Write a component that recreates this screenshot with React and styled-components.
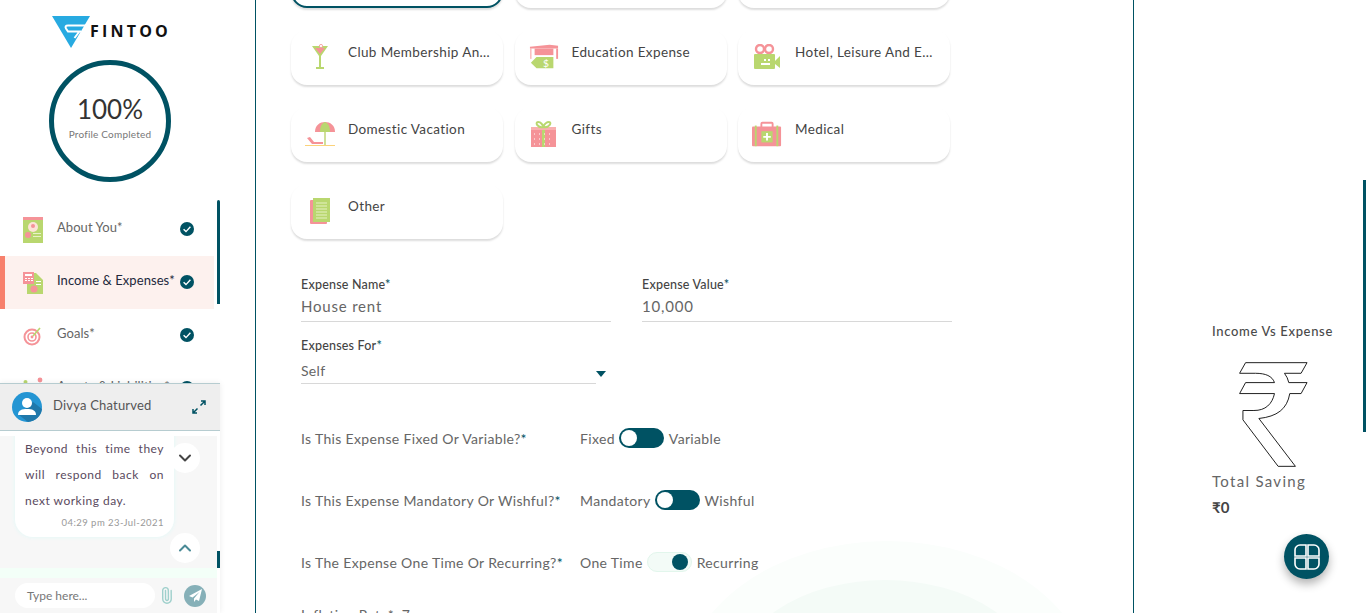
import React from 'react';
import styled, { createGlobalStyle } from 'styled-components';
import { ChevronDown, ChevronUp, Paperclip } from 'lucide-react';

const TEAL = '#005263';
const PINK = '#f59398';
const GREEN = '#b9d76f';

const GlobalStyle = createGlobalStyle`
  html, body {
    margin: 0;
    padding: 0;
    height: 613px;
    overflow: hidden;
    background: #fff;
    font-family: "Lato", "Open Sans", sans-serif;
    color: #444;
  }
  * { box-sizing: border-box; }
`;

const Page = styled.div`
  display: grid;
  grid-template-columns: 256px 878px 232px;
  height: 613px;
  overflow: hidden;
`;

/* sidebar */
const Sidebar = styled.aside`
  position: relative;
  height: 613px;
  padding-top: 16px;
  border-right: 1px solid ${TEAL};
  overflow: hidden;
`;

const Logo = styled.div`
  display: flex;
  align-items: center;
  height: 32px;
  margin-left: 52px;
`;

const LogoText = styled.span`
  font-family: "Open Sans", sans-serif;
  font-weight: 700;
  font-size: 16px;
  letter-spacing: 3.2px;
  color: #111;
  margin-left: -1px;
  margin-top: -2px;
`;

const ProgressRing = styled.div`
  display: flex;
  flex-direction: column;
  align-items: center;
  justify-content: center;
  width: 122px;
  height: 122px;
  margin: 12px 0 0 49px;
  border: 5px solid ${TEAL};
  border-radius: 50%;
`;

const Percent = styled.div`
  font-size: 26px;
  line-height: 30px;
  color: #333;
  margin-top: -7px;
`;

const RingLabel = styled.div`
  font-size: 10px;
  line-height: 14px;
  letter-spacing: 0.2px;
  margin-top: 3px;
  color: #777;
`;

const Nav = styled.nav`
  margin-top: 21px;
  width: 214px;
`;

const NavItem = styled.div`
  display: flex;
  align-items: center;
  height: 53px;
  padding-right: 20px;
  padding-left: ${(p) => (p.$active ? '18px' : '23px')};
  border-left: ${(p) => (p.$active ? '5px solid #f7806c' : 'none')};
  background: ${(p) => (p.$active ? '#fdf1ee' : 'transparent')};
  font-size: 13px;
  letter-spacing: 0.06px;
  color: ${(p) => (p.$active ? '#22283c' : '#666')};
`;

const NavIcon = styled.span`
  display: flex;
  width: 34px;
  flex: none;
`;

const NavLabel = styled.span`
  flex: 1;
  white-space: nowrap;
  margin-top: -6px;
`;

const NavScroll = styled.div`
  position: absolute;
  left: 217px;
  top: 200px;
  width: 3px;
  height: 104px;
  background: ${TEAL};
  border-radius: 2px 2px 0 0;
`;

/* chat */
const Chat = styled.div`
  position: absolute;
  left: 0;
  top: 383px;
  width: 220px;
  height: 230px;
  display: flex;
  flex-direction: column;
  background: #fff;
  box-shadow: 0 0 6px rgba(0, 0, 0, 0.08);
`;

const ChatHeader = styled.div`
  display: flex;
  align-items: center;
  flex: none;
  height: 48px;
  padding: 0 14px 0 12px;
  background: #eeeeee;
  border-top: 1px solid #b6ccd0;
  border-bottom: 1px solid #b6ccd0;
`;

const ChatName = styled.div`
  flex: 1;
  margin-left: 11px;
  margin-top: -4px;
  font-size: 13px;
  letter-spacing: 0.2px;
  color: #555;
`;

const ChatBody = styled.div`
  position: relative;
  height: 132px;
  margin-top: 5px;
  width: 217px;
  padding-left: 15px;
  background: #f7f7f7;
  overflow: hidden;
`;

const Bubble = styled.div`
  width: 159px;
  margin-top: -20px;
  padding: 20px 10px 8px;
  background: #fff;
  border-radius: 0 0 18px 18px;
  box-shadow: 0 0 4px #dff9f8;
`;

const BubbleText = styled.div`
  font-size: 12px;
  line-height: 26px;
  letter-spacing: 0.5px;
  text-align: justify;
  color: #5a4a5e;
`;

const BubbleTime = styled.div`
  font-size: 9.5px;
  line-height: 12px;
  letter-spacing: 0.45px;
  text-align: right;
  color: #999;
  margin-top: 3px;
`;

const ScrollButton = styled.div`
  position: absolute;
  left: 170px;
  top: ${(p) => p.$top}px;
  width: 30px;
  height: 30px;
  display: flex;
  align-items: center;
  justify-content: center;
  border-radius: 50%;
  background: #fff;
  color: ${(p) => p.$color};
`;

const GreenStrip = styled.div`
  flex: none;
  height: 10px;
  width: 217px;
  background: #f3fff8;
`;

const ChatScrollPiece = styled.div`
  position: absolute;
  left: 217px;
  top: 168px;
  width: 3px;
  height: 17px;
  background: ${TEAL};
`;

const ChatInputRow = styled.div`
  display: flex;
  align-items: center;
  flex: 1;
  width: 217px;
  padding-left: 15px;
  background: #f7f7f7;
`;

const ChatInput = styled.div`
  width: 140px;
  height: 25px;
  padding-left: 12px;
  border-radius: 13px;
  background: #fff;
  font-size: 12px;
  line-height: 25px;
  color: #777;
`;

const ClipIcon = styled(Paperclip)`
  margin-left: 3px;
  color: #9fd0cc;
  transform: rotate(-45deg);
`;

const SendButton = styled.div`
  display: flex;
  align-items: center;
  justify-content: center;
  width: 22px;
  height: 22px;
  margin-left: 9px;
  border-radius: 50%;
  background: #86b0b8;
`;

/* main */
const Main = styled.main`
  position: relative;
  height: 613px;
  border-right: 1px solid ${TEAL};
  overflow: hidden;
`;

const WaveOuter = styled.div`
  position: absolute;
  left: 426px;
  top: 541px;
  width: 410px;
  height: 300px;
  border-radius: 50%;
  background: #fbfefc;
`;

const WaveInner = styled.div`
  position: absolute;
  left: 478px;
  top: 580px;
  width: 302px;
  height: 200px;
  border-radius: 50%;
  background: #f4fbf7;
`;

const Content = styled.div`
  position: relative;
  margin-top: -47px;
  padding-left: 35px;
`;

const ExpenseGrid = styled.div`
  display: grid;
  grid-template-columns: repeat(3, 212px);
  column-gap: 11.5px;
  row-gap: 22px;
`;

const Card = styled.div`
  display: flex;
  align-items: flex-start;
  height: 55px;
  padding: 14px 8px 0 14px;
  background: #fff;
  border-radius: 16px;
  border: ${(p) => (p.$selected ? `2px solid ${TEAL}` : 'none')};
  box-shadow: 0 2px 2px #ddd;
  font-size: 13.5px;
  letter-spacing: 0.38px;
  color: #444;
`;

const CardIcon = styled.span`
  display: flex;
  justify-content: center;
  flex: none;
  width: 30px;
  margin-right: 13px;
`;

const CardLabel = styled.span`
  white-space: nowrap;
  line-height: 16px;
`;

const Form = styled.div`
  padding-left: 10px;
  margin-top: 37px;
`;

const FieldRow = styled.div`
  display: grid;
  grid-template-columns: 310px 310px;
  column-gap: 31px;
`;

const Field = styled.div`
  padding-top: 1px;
  border-bottom: 1px solid #d8d8d8;
  height: 46px;
`;

const FieldLabel = styled.div`
  font-size: 12.5px;
  line-height: 16px;
  font-weight: 500;
  letter-spacing: 0.2px;
  color: #444;
  span { color: ${TEAL}; }
`;

const FieldValue = styled.div`
  font-size: 15px;
  line-height: 22px;
  margin-top: 2px;
  letter-spacing: 0.8px;
  color: #666;
`;

const SelectWrap = styled.div`
  display: flex;
  align-items: flex-end;
  margin-top: 16px;
`;

const SelectField = styled.div`
  width: 295px;
  height: 46px;
  border-bottom: 1px solid #d8d8d8;
`;

const SelectValue = styled.div`
  margin-top: 8px;
  font-size: 14px;
  line-height: 18px;
  letter-spacing: 0.3px;
  color: #666;
`;

const Caret = styled.div`
  width: 0;
  height: 0;
  margin: 0 0 7px 0;
  border-left: 5.5px solid transparent;
  border-right: 5.5px solid transparent;
  border-top: 6.5px solid ${TEAL};
`;

const ToggleRows = styled.div`
  margin-top: 44px;
  display: flex;
  flex-direction: column;
  gap: 42px;
`;

const ToggleRow = styled.div`
  display: flex;
  align-items: center;
  height: 20px;
  font-size: 14px;
  letter-spacing: 0.34px;
  color: #666;
  span.star { color: ${TEAL}; }
`;

const InflationRow = styled(ToggleRow)`
  margin-top: -10px;
`;

const Question = styled.div`
  width: 279px;
  flex: none;
  white-space: nowrap;
`;

const Switch = styled.div`
  display: flex;
  align-items: center;
  justify-content: ${(p) => (p.$on ? 'flex-end' : 'flex-start')};
  width: 45px;
  height: 20px;
  margin: 0 5px 0 4px;
  padding: 0 ${(p) => (p.$on ? '3px' : '2px')};
  border-radius: 10px;
  background: ${(p) => (p.$on ? '#f3fbf7' : TEAL)};
  border: ${(p) => (p.$on ? '1px solid #e2f6ec' : 'none')};
`;

const Knob = styled.div`
  width: 16px;
  height: 16px;
  border-radius: 50%;
  background: ${(p) => (p.$on ? TEAL : '#fff')};
`;

/* right panel */
const Side = styled.aside`
  position: relative;
  height: 613px;
  padding: 323px 0 0 78px;
`;

const SideTitle = styled.div`
  font-size: 13px;
  line-height: 16px;
  font-weight: 500;
  letter-spacing: 0.66px;
  color: #4a4a4a;
  white-space: nowrap;
`;

const RupeeBox = styled.div`
  display: flex;
  margin: 22px 0 0 25px;
`;

const Saving = styled.div`
  font-size: 15px;
  line-height: 20px;
  letter-spacing: 1.3px;
  color: #666;
  margin-top: 3px;
`;

const SavingValue = styled.div`
  font-size: 15px;
  line-height: 20px;
  font-weight: 700;
  color: #444;
  margin-top: 6px;
`;

const SideScroll = styled.div`
  position: absolute;
  right: 0;
  top: 180px;
  width: 3px;
  height: 252px;
  background: ${TEAL};
`;

const Fab = styled.div`
  position: absolute;
  left: 150px;
  top: 534px;
  width: 45px;
  height: 45px;
  display: flex;
  align-items: center;
  justify-content: center;
  border-radius: 50%;
  background: ${TEAL};
  box-shadow: 0 5px 10px rgba(0, 0, 0, 0.3);
`;

/* drawings */
const FintooMark = () => (
  <svg width="39" height="32" viewBox="0 0 39 32">
    <path fill="#27aae1" d="M0 0H38L19 32Z" />
    <path fill="none" stroke="#fff" strokeWidth="2" d="M35 9.5H16Q12.5 9.5 14 12.5L16 15.5H29M27 16L22.5 22" />
  </svg>
);

const AboutIcon = () => (
  <svg width="20" height="26" viewBox="0 0 20 26">
    <rect width="20" height="26" fill={GREEN} />
    <rect width="20" height="3" fill={PINK} />
    <circle cx="10" cy="10" r="5" fill="#fde3d8" />
    <circle cx="10" cy="9" r="2" fill={PINK} />
    <circle cx="5" cy="18" r="3" fill={PINK} />
    <rect x="10" y="16" width="8" height="1" fill="#e8f2c8" />
    <rect x="10" y="19" width="8" height="1" fill="#e8f2c8" />
  </svg>
);

const IncomeIcon = () => (
  <svg width="20" height="24" viewBox="0 0 20 24">
    <path fill={GREEN} d="M4 2H13L20 9V23H4Z" />
    <rect width="11" height="12" y="1" fill={PINK} />
    <path fill="#fff" d="M2 3H9V5H2ZM2 7H4V8H2ZM5 7H7V8H5ZM8 7H10V8H8ZM2 9H4V10H2ZM5 9H7V10H5ZM8 9H10V10H8Z" />
    <circle cx="11" cy="18" r="3.5" fill={PINK} />
    <rect x="13" y="10" width="5" height="1" fill="#fff" />
    <rect x="13" y="13" width="5" height="1" fill="#fff" />
  </svg>
);

const GoalsIcon = () => (
  <svg width="20" height="20" viewBox="0 0 20 20">
    <circle cx="9" cy="11" r="7.5" fill="none" stroke={PINK} strokeWidth="2" />
    <circle cx="9" cy="11" r="4" fill="none" stroke={PINK} strokeWidth="1.6" />
    <circle cx="9" cy="11" r="1.4" fill={PINK} />
    <path d="M10 10L17 2" stroke={GREEN} strokeWidth="1.6" />
  </svg>
);

const AssetsIcon = () => (
  <svg width="22" height="24" viewBox="0 0 22 24">
    <circle cx="2.5" cy="5" r="2" fill={GREEN} />
    <circle cx="17" cy="3" r="2.4" fill={PINK} />
    <rect x="14" y="6" width="6" height="10" fill={PINK} />
  </svg>
);

const TrendCheck = () => (
  <svg width="14" height="14" viewBox="0 0 14 14" style={{ flex: 'none', marginTop: -2 }}>
    <circle cx="7" cy="7" r="7" fill={TEAL} />
    <path d="M3.6 7.2L6 9.6L10.4 4.8" fill="none" stroke="#fff" strokeWidth="1.4" />
  </svg>
);

const ClubIcon = () => (
  <svg width="16" height="26" viewBox="0 0 16 26">
    <path fill={GREEN} d="M0 2H16L9 12V23H12V25H4V23H7V12Z" />
    <path fill={PINK} d="M3 4H13L8 10Z" />
    <circle cx="9" cy="2" r="1.6" fill="#fff" stroke={PINK} strokeWidth="0.8" />
  </svg>
);

const EducationIcon = () => (
  <svg width="32" height="26" viewBox="0 0 32 26">
    <path fill={PINK} d="M1 2L22 0L31 1V4H1Z" />
    <rect x="6" y="4" width="20" height="7" fill={PINK} />
    <rect x="29" y="4" width="2" height="11" fill={PINK} />
    <path fill={GREEN} d="M8 13H26V25H8L2 19Z" />
    <path fill="none" stroke={PINK} strokeWidth="1" d="M2 4V15" />
    <text x="15" y="23.5" fontSize="11" fill="#fff" fontFamily="Lato, sans-serif">$</text>
  </svg>
);

const HotelIcon = () => (
  <svg width="27" height="26" viewBox="0 0 27 26">
    <circle cx="6" cy="5" r="4" fill="none" stroke={PINK} strokeWidth="2.4" />
    <circle cx="15" cy="5" r="4" fill="none" stroke={PINK} strokeWidth="2.4" />
    <rect y="10" width="21" height="15" rx="1" fill={GREEN} />
    <path fill={GREEN} d="M21 17L26 12V24L21 20Z" />
    <rect x="7" y="19" width="9" height="2" fill="#fff" />
    <rect x="10" y="15" width="2" height="2" fill="#fff" />
    <rect x="14" y="15" width="2" height="2" fill="#fff" />
  </svg>
);

const VacationIcon = () => (
  <svg width="30" height="26" viewBox="0 0 30 26">
    <path fill={PINK} d="M10 11C10 4 15 1 20 1C25 1 30 4 30 11Z" />
    <path fill={GREEN} d="M15 11C15 5 17 2 20 1C23 2 25 5 25 11Z" />
    <rect x="19" y="11" width="2" height="13" fill="#cfe09a" />
    <path fill={PINK} d="M2 17L5 16L9 21H18V23H7Z" />
    <rect y="24" width="30" height="1" fill="#fbd27a" />
  </svg>
);

const GiftIcon = () => (
  <svg width="25" height="26" viewBox="0 0 25 26">
    <rect y="6" width="25" height="20" fill={PINK} />
    <rect x="11" y="5" width="3" height="21" fill={GREEN} />
    <rect y="6" width="25" height="3" fill="#f9b0b0" />
    <path fill="none" stroke={GREEN} strokeWidth="2" d="M12 6C6 7 4 1 7 1C10 1 12 4 12 6C13 4 15 1 18 1C21 1 19 7 12 6Z" />
    <path stroke="#fff" strokeWidth="1" strokeDasharray="1 4" d="M3 13H22M3 18H22M3 23H22" />
  </svg>
);

const MedicalIcon = () => (
  <svg width="32" height="26" viewBox="0 0 32 26">
    <rect x="10" y="1" width="12" height="6" rx="1" fill="none" stroke={PINK} strokeWidth="2" />
    <rect y="5" width="31" height="21" rx="1" fill={PINK} />
    <rect x="3" y="4" width="2" height="22" fill={GREEN} />
    <rect x="26" y="4" width="2" height="22" fill={GREEN} />
    <rect x="10" y="10" width="12" height="12" fill={GREEN} />
    <path fill="#fff" d="M15 12H17V15H20V17H17V20H15V17H12V15H15Z" />
  </svg>
);

const OtherIcon = () => (
  <svg width="20" height="26" viewBox="0 0 20 26">
    <rect y="2" width="17" height="24" rx="1" fill={PINK} />
    <rect x="3" width="17" height="24" fill={GREEN} />
    <path stroke="#e6f1c4" strokeWidth="1" d="M6 5H17M6 8H17M6 11H17M6 14H17M6 17H17M6 20H17" />
  </svg>
);

const RupeeOutline = () => (
  <svg width="72" height="107" viewBox="320 185 215 322">
    <path
      fill="#fff"
      stroke="#111"
      strokeWidth="2.8"
      d="M345 190H530L512 222H462Q472 235 475 250H530L512 283H478C470 330 440 352 385 358L495 502H443L337 362V334H370C405 334 425 315 432 283H327L345 250H432C425 230 405 222 375 222H327Z"
    />
  </svg>
);

const QuadIcon = () => (
  <svg width="26" height="26" viewBox="0 0 26 26" fill="none" stroke="#fff" strokeWidth="1.6">
    <path d="M1 12V6A5 5 0 0 1 6 1H12V12Z" />
    <path d="M14 1H20A5 5 0 0 1 25 6V12H14Z" />
    <path d="M1 14H12V25H6A5 5 0 0 1 1 20Z" />
    <path d="M14 14H25V20A5 5 0 0 1 20 25H14Z" />
  </svg>
);

const Avatar = () => (
  <svg width="30" height="30" viewBox="0 0 30 30">
    <circle cx="15" cy="15" r="15" fill="#2495d3" />
    <path fill="#1f78ab" d="M21 10L30 17A15 15 0 0 1 16 30L7 23Z" />
    <circle cx="15" cy="11" r="5" fill="#fff" />
    <path fill="#fff" d="M6 23C6 18 10 17 15 17C20 17 24 18 24 23Z" />
  </svg>
);

const ExpandIcon = () => (
  <svg width="14" height="14" viewBox="0 0 14 14" fill="none" stroke={TEAL} strokeWidth="1.5">
    <path d="M8.5 5.5L13 1M9 1H13V5M5.5 8.5L1 13M1 9V13H5" />
  </svg>
);

const PlaneIcon = () => (
  <svg width="13" height="13" viewBox="0 0 13 13">
    <path fill="#fff" d="M13 0L0 7L3.5 8.5L10.5 3L5 9.5V13L7 10.5L10 12Z" />
  </svg>
);

const navItems = [
  { label: 'About You*', icon: <AboutIcon /> },
  { label: 'Income & Expenses*', icon: <IncomeIcon />, active: true },
  { label: 'Goals*', icon: <GoalsIcon /> },
  { label: 'Assets & Liabilities*', icon: <AssetsIcon /> },
];

const expenses = [
  { selected: true },
  {},
  {},
  { label: 'Club Membership An…', icon: <ClubIcon /> },
  { label: 'Education Expense', icon: <EducationIcon /> },
  { label: 'Hotel, Leisure And E…', icon: <HotelIcon /> },
  { label: 'Domestic Vacation', icon: <VacationIcon /> },
  { label: 'Gifts', icon: <GiftIcon /> },
  { label: 'Medical', icon: <MedicalIcon /> },
  { label: 'Other', icon: <OtherIcon /> },
];

const toggles = [
  { q: 'Is This Expense Fixed Or Variable?', a: 'Fixed', b: 'Variable' },
  { q: 'Is This Expense Mandatory Or Wishful?', a: 'Mandatory', b: 'Wishful' },
  { q: 'Is The Expense One Time Or Recurring?', a: 'One Time', b: 'Recurring', on: true },
];

export default function App() {
  return (
    <Page>
      <GlobalStyle />
      <Sidebar>
        <Logo>
          <FintooMark />
          <LogoText>FINTOO</LogoText>
        </Logo>
        <ProgressRing>
          <Percent>100%</Percent>
          <RingLabel>Profile Completed</RingLabel>
        </ProgressRing>
        <Nav>
          {navItems.map((item) => (
            <NavItem key={item.label} $active={item.active}>
              <NavIcon>{item.icon}</NavIcon>
              <NavLabel>{item.label}</NavLabel>
              <TrendCheck />
            </NavItem>
          ))}
        </Nav>
        <NavScroll />
        <Chat>
          <ChatHeader>
            <Avatar />
            <ChatName>Divya Chaturved</ChatName>
            <ExpandIcon />
          </ChatHeader>
          <ChatBody>
            <Bubble>
              <BubbleText>Beyond this time they will respond back on next working day.</BubbleText>
              <BubbleTime>04:29 pm 23-Jul-2021</BubbleTime>
            </Bubble>
            <ScrollButton $top={7} $color="#444"><ChevronDown size={20} strokeWidth={2.4} /></ScrollButton>
            <ScrollButton $top={97} $color="#4a8a96"><ChevronUp size={20} strokeWidth={2.4} /></ScrollButton>
          </ChatBody>
          <GreenStrip />
          <ChatScrollPiece />
          <ChatInputRow>
            <ChatInput>Type here...</ChatInput>
            <ClipIcon size={17} />
            <SendButton><PlaneIcon /></SendButton>
          </ChatInputRow>
        </Chat>
      </Sidebar>

      <Main>
        <WaveOuter />
        <WaveInner />
        <Content>
          <ExpenseGrid>
            {expenses.map((e, i) => (
              <Card key={i} $selected={e.selected}>
                {e.icon && <CardIcon>{e.icon}</CardIcon>}
                {e.label && <CardLabel>{e.label}</CardLabel>}
              </Card>
            ))}
          </ExpenseGrid>
          <Form>
            <FieldRow>
              <Field>
                <FieldLabel>Expense Name<span>*</span></FieldLabel>
                <FieldValue>House rent</FieldValue>
              </Field>
              <Field>
                <FieldLabel>Expense Value<span>*</span></FieldLabel>
                <FieldValue>10,000</FieldValue>
              </Field>
            </FieldRow>
            <SelectWrap>
              <SelectField>
                <FieldLabel>Expenses For<span>*</span></FieldLabel>
                <SelectValue>Self</SelectValue>
              </SelectField>
              <Caret />
            </SelectWrap>
            <ToggleRows>
              {toggles.map((t) => (
                <ToggleRow key={t.q}>
                  <Question>{t.q}<span className="star">*</span></Question>
                  <span>{t.a}</span>
                  <Switch $on={t.on}><Knob $on={t.on} /></Switch>
                  <span>{t.b}</span>
                </ToggleRow>
              ))}
              <InflationRow>
                <Question>Inflation Rate*: 7</Question>
              </InflationRow>
            </ToggleRows>
          </Form>
        </Content>
      </Main>

      <Side>
        <SideTitle>Income Vs Expense</SideTitle>
        <RupeeBox><RupeeOutline /></RupeeBox>
        <Saving>Total Saving</Saving>
        <SavingValue>₹0</SavingValue>
        <SideScroll />
        <Fab><QuadIcon /></Fab>
      </Side>
    </Page>
  );
}
